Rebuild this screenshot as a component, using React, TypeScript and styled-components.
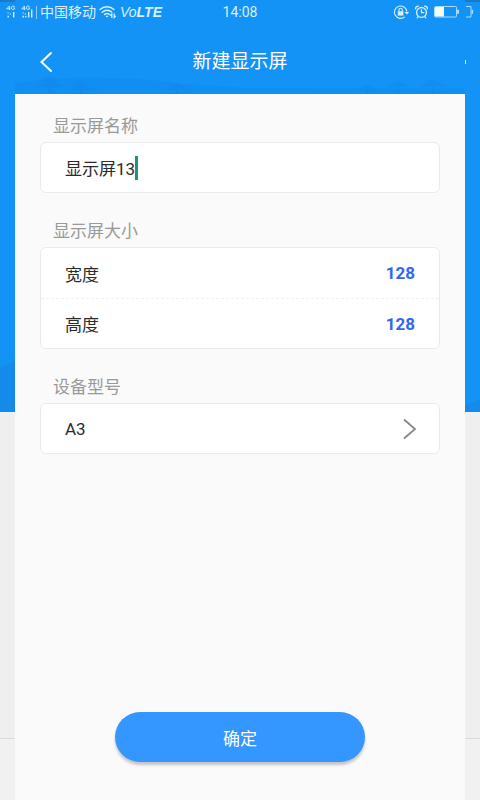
import React, { useState } from "react";
import styled, { createGlobalStyle } from "styled-components";

const GlobalStyle = createGlobalStyle`
  * { box-sizing: border-box; }
  body {
    margin: 0;
    background: #f0f0f0;
    font-family: Roboto, "Noto Sans CJK SC", sans-serif;
    font-size: 17px;
    color: #2b2b2b;
  }
  input, select, button { font: inherit; color: inherit; }
`;

const Screen = styled.div`
  display: grid;
  min-height: 100vh;
  > * { grid-area: 1 / 1; min-width: 0; }
`;

const Backdrop = styled.div`
  display: flex;
  flex-direction: column;
`;

const Banner = styled.div`
  height: 412px;
  display: flex;
  flex-direction: column;
  justify-content: space-between;
  background: #1393f6;
`;

const TopEdge = styled.div`
  height: 2px;
  display: flex;
  justify-content: space-between;
  &::before, &::after { content: ""; width: 15px; background: #1c79c6; }
`;

const BannerHills = styled.svg`
  display: block;
  width: 100%;
  height: 54px;
`;

const BackdropBody = styled.div`
  flex: 1;
  background: #efefef;
  border-top: 1px solid #e6f2fb;
`;

const BackdropFooter = styled.div`
  height: 62px;
  background: #f1f1f1;
  border-top: 1px solid #dadada;
`;

const Page = styled.div`
  display: flex;
  flex-direction: column;
`;

const StatusBar = styled.div`
  height: 24px;
  display: grid;
  grid-template-columns: 1fr auto 1fr;
  align-items: center;
  padding: 0 6px;
  font-size: 14px;
  line-height: 24px;
  color: #d8efff;
`;

const StatusGroup = styled.div<{ $end?: boolean }>`
  display: flex;
  align-items: center;
  justify-content: ${(p) => (p.$end ? "flex-end" : "flex-start")};
  gap: ${(p) => (p.$end ? "6px" : "3px")};
  white-space: nowrap;
  min-width: 0;
`;

const Volte = styled.span`
  font-family: "Liberation Sans", sans-serif;
  font-style: italic;
  font-size: 14px;
  b { font-weight: 700; }
`;

const Icon = styled.svg`
  display: block;
  flex: none;
  overflow: visible;
`;

const NavBar = styled.header`
  height: 70px;
  padding: 6px 0 0 32px;
  display: grid;
  grid-template-columns: 32px 1fr 32px 32px;
  align-items: center;
  position: relative;
  color: #fff;
`;

const BackButton = styled.button`
  border: 0;
  padding: 0 0 0 8px;
  height: 40px;
  background: none;
  cursor: pointer;
  display: flex;
  align-items: center;
`;

const Title = styled.h1`
  margin: 0;
  font-size: 19px;
  line-height: 28px;
  font-weight: 400;
  text-align: center;
`;

const Treeline = styled.svg`
  position: absolute;
  left: 15px;
  bottom: 0;
  width: calc(100% - 30px);
  height: 20px;
  pointer-events: none;
`;

const MorePeek = styled.span`
  justify-self: end;
  grid-column: 4;
  width: 1px;
  height: 4px;
  margin-right: 14px;
  background: #d8efff;
`;

const Sheet = styled.form`
  flex: 1;
  margin: 0 15px;
  padding: 20px 25px 38px;
  background: #fafafa;
  display: flex;
  flex-direction: column;
  gap: 26px;
`;

const Section = styled.section`
  display: flex;
  flex-direction: column;
  gap: 4px;
`;

const Caption = styled.label`
  padding-left: 13px;
  line-height: 24px;
  color: #999;
`;

const Card = styled.div`
  border: 1px solid #ebebeb;
  border-radius: 6px;
  background: #fff;
`;

const Row = styled.div`
  height: 50px;
  padding: 0 24px;
  display: flex;
  align-items: center;
  &:only-child { height: 49px; }
  & + & { border-top: 1px dashed #f1f1f1; }
`;

const RowLabel = styled.label`
  flex: 1;
`;

const NameInput = styled.input`
  border: 0;
  padding: 0;
  outline: 0;
  background: none;
  caret-color: transparent;
  field-sizing: content;
`;

const Caret = styled.span`
  width: 3px;
  height: 24px;
  background: #159582;
`;

const SizeInput = styled.input`
  width: 96px;
  border: 0;
  padding: 0;
  outline: 0;
  background: none;
  text-align: right;
  font-weight: 700;
  color: #3366f0;
`;

const ModelSelect = styled.select`
  flex: 1;
  height: 49px;
  border: 0;
  padding: 0;
  outline: 0;
  background: none;
  appearance: none;
`;

const Confirm = styled.button`
  margin: auto auto 0;
  width: 250px;
  max-width: 100%;
  height: 50px;
  border: 0;
  border-radius: 25px;
  background: #3397ff;
  color: #fff;
  box-shadow: 0 3px 3px rgba(0, 0, 0, 0.22);
  cursor: pointer;
`;

const SignalIcon = ({ full }: { full?: boolean }) => (
  <Icon width="12" height="14" viewBox="0 0 12 14" fill="#d8efff" aria-hidden="true">
    <g fill="none" stroke="#d8efff" strokeWidth="0.9">
      <path d="M3.4 5V1L0.8 3.8H4.4M8.6 1.6C7.6 0.6 5.4 0.8 5.4 2.8S7.6 5 8.6 3.9V2.9H7.2" />
    </g>
    <path d="M1.5 10.8h1.4v1.7H1.5zM1.5 7.4h1.2v1.2H1.5zM3.8 8.4H5v1.2H3.8zM7 7h1.4v5.5H7z" />
    {full ? <path d="M4.2 11h1.2v1.5H4.2zM10 4.5h1.4v8H10z" /> : null}
  </Icon>
);

const WifiIcon = () => (
  <Icon width="18" height="14" viewBox="0 0 18 14" fill="none" stroke="#d8efff" strokeWidth="1.4" strokeLinecap="round" aria-hidden="true">
    <path d="M1 4.6C5 0.8 11 0.8 15 4.6M3.2 7.2C6 4.6 10 4.6 12.6 7M5.5 9.6C7 8.2 9 8.2 10.4 9.4" />
    <path d="M6.6 11.2 8 12.6 9.4 11.2 8 10.4z" fill="#d8efff" stroke="none" />
    <path d="M12.8 12.4V9L11.6 10.2M15.2 9V12.4L16.4 11.2" strokeWidth="1.3" />
  </Icon>
);

const RotationLockIcon = () => (
  <Icon width="15" height="14" viewBox="0 0 15 14" fill="none" stroke="#d8efff" strokeWidth="1.1" aria-hidden="true">
    <path d="M12.8 6.6A6.2 6.2 0 1 0 10.8 11.8" />
    <path d="M10.6 7h4.6l-2.3 2.6z" fill="#d8efff" stroke="none" />
    <path d="M3.8 6.2h5.6v4.4H3.8z" fill="#d8efff" stroke="none" />
    <path d="M5 6.2V4.8a1.6 1.6 0 0 1 3.2 0V6.2" />
  </Icon>
);

const AlarmIcon = () => (
  <Icon width="13" height="14" viewBox="0 0 13 14" fill="none" stroke="#d8efff" strokeWidth="1.3" strokeLinecap="round" aria-hidden="true">
    <circle cx="6.5" cy="7.4" r="4.9" />
    <path d="M6.5 4.8V7.6H8.8M0.6 3.8C0.6 2 1.8 1 3.4 1.2M12.4 3.8C12.4 2 11.2 1 9.6 1.2M3.2 11.6 2.2 12.8M9.8 11.6l1 1.2" />
  </Icon>
);

const BatteryIcon = () => (
  <Icon width="25" height="12" viewBox="0 0 25 12" aria-hidden="true">
    <rect x="0.5" y="0.5" width="22" height="10.5" rx="1" fill="none" stroke="#a9dbff" />
    <rect x="1" y="1" width="9" height="9.5" fill="#f2faff" />
    <path d="M23 3.8h2v4h-2z" fill="#a9dbff" />
  </Icon>
);

const BatteryTail = () => (
  <Icon width="9" height="12" viewBox="0 0 9 12" aria-hidden="true">
    <path d="M1 0.5H6V11H1" fill="none" stroke="#a9dbff" />
    <path d="M6.5 3.8h1.6v4H6.5z" fill="#a9dbff" />
  </Icon>
);

const Trees = () => (
  <Treeline viewBox="0 0 450 20" preserveAspectRatio="none" fill="#0d7fe0" aria-hidden="true">
    <path opacity="0.22" d="M0 9C50 2 110 2 170 10L230 14 450 15V20H0z" />
    <g opacity="0.22">
      <path d="M34 2 44 7 39 8 49 13H37V20H33V13H20L30 8 25 7z" />
      <path d="M66 6 74 10 70 11 79 15H68V20H65V15H54L62 11 58 10z" />
      <path d="M162 9 174 15H164V20H161V15H151z" />
    </g>
    <g opacity="0.18">
      <path d="M352 10 362 15H353V20H351V15H342z" />
      <path d="M383 7 395 13H384V20H382V13H371z" />
      <path d="M418 5 432 13H419V20H417V13H404z" />
    </g>
  </Treeline>
);

export default function App() {
  const [name, setName] = useState("显示屏13");
  const [width, setWidth] = useState("128");
  const [height, setHeight] = useState("128");

  return (
    <>
      <GlobalStyle />
      <Screen>
        <Backdrop aria-hidden="true">
          <Banner>
            <TopEdge />
            <BannerHills viewBox="0 0 480 54" preserveAspectRatio="none">
              <path d="M0 10C5 7 10 5 15 3H240L465 47 480 41V54H0z" fill="#148be8" />
            </BannerHills>
          </Banner>
          <BackdropBody />
          <BackdropFooter />
        </Backdrop>
        <Page>
          <StatusBar>
            <StatusGroup>
              <SignalIcon />
              <SignalIcon full />
              <Icon width="1" height="13" aria-hidden="true">
                <rect width="1" height="13" fill="#8ecbfa" />
              </Icon>
              <span>中国移动</span>
              <WifiIcon />
              <Volte>Vo<b>LTE</b></Volte>
            </StatusGroup>
            <span>14:08</span>
            <StatusGroup $end>
              <RotationLockIcon />
              <AlarmIcon />
              <BatteryIcon />
              <BatteryTail />
            </StatusGroup>
          </StatusBar>
          <NavBar>
            <Trees />
            <BackButton type="button" aria-label="返回">
              <Icon width="12" height="20" viewBox="0 0 12 20" fill="none" stroke="#fff" strokeWidth="2" strokeLinecap="round">
                <path d="M11 1 1.5 10 11 19" />
              </Icon>
            </BackButton>
            <Title>新建显示屏</Title>
            <MorePeek />
          </NavBar>
          <Sheet onSubmit={(e: React.FormEvent) => e.preventDefault()}>
            <Section>
              <Caption htmlFor="name">显示屏名称</Caption>
              <Card>
                <Row>
                  <NameInput id="name" value={name} onChange={(e) => setName(e.target.value)} />
                  <Caret />
                </Row>
              </Card>
            </Section>
            <Section>
              <Caption as="div">显示屏大小</Caption>
              <Card>
                <Row>
                  <RowLabel htmlFor="width">宽度</RowLabel>
                  <SizeInput id="width" inputMode="numeric" value={width} onChange={(e) => setWidth(e.target.value)} />
                </Row>
                <Row>
                  <RowLabel htmlFor="height">高度</RowLabel>
                  <SizeInput id="height" inputMode="numeric" value={height} onChange={(e) => setHeight(e.target.value)} />
                </Row>
              </Card>
            </Section>
            <Section>
              <Caption htmlFor="model">设备型号</Caption>
              <Card>
                <Row>
                  <ModelSelect id="model" defaultValue="A3">
                    <option>A3</option>
                  </ModelSelect>
                  <Icon width="12" height="20" viewBox="0 0 12 20" fill="none" stroke="#888" strokeWidth="1.8" aria-hidden="true">
                    <path d="M1 0.5 12 10 1 19.5" />
                  </Icon>
                </Row>
              </Card>
            </Section>
            <Confirm type="submit">确定</Confirm>
          </Sheet>
        </Page>
      </Screen>
    </>
  );
}
